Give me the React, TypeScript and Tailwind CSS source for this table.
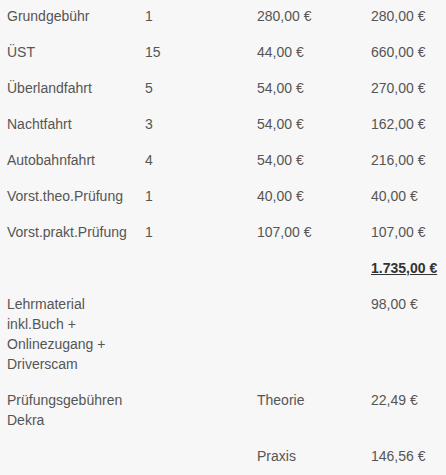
const rows: { name: string[]; qty?: string; unit?: string; total?: string; sum?: boolean }[] = [
  { name: ['Grundgebühr'], qty: '1', unit: '280,00 €', total: '280,00 €' },
  { name: ['ÜST'], qty: '15', unit: '44,00 €', total: '660,00 €' },
  { name: ['Überlandfahrt'], qty: '5', unit: '54,00 €', total: '270,00 €' },
  { name: ['Nachtfahrt'], qty: '3', unit: '54,00 €', total: '162,00 €' },
  { name: ['Autobahnfahrt'], qty: '4', unit: '54,00 €', total: '216,00 €' },
  { name: ['Vorst.theo.Prüfung'], qty: '1', unit: '40,00 €', total: '40,00 €' },
  { name: ['Vorst.prakt.Prüfung'], qty: '1', unit: '107,00 €', total: '107,00 €' },
  { name: [], total: '1.735,00 €', sum: true },
  { name: ['Lehrmaterial', 'inkl.Buch +', 'Onlinezugang +', 'Driverscam'], total: '98,00 €' },
  { name: ['Prüfungsgebühren', 'Dekra'], unit: 'Theorie', total: '22,49 €' },
  { name: [], unit: 'Praxis', total: '146,56 €' },
]

export default function App() {
  return (
    <div
      className="w-[446px] h-[475px] overflow-hidden bg-[#f7f7f7] text-[14px] leading-[20px] text-[#555]"
      style={{ fontFamily: '"Liberation Sans", Arial, sans-serif' }}
    >
      <div className="-mt-[2px]">
        {rows.map((r, i) => (
          <div key={i} className="grid grid-cols-[138px_112px_114px_1fr]">
            <div className="pl-[7px] py-2">
              {r.name.map((l, j) => (
                <div key={j}>{l}</div>
              ))}
              {r.name.length === 0 && <div>&nbsp;</div>}
            </div>
            <div className="pl-[7px] py-2">{r.qty}</div>
            <div className="pl-[7px] py-2">{r.unit}</div>
            <div className="pl-[7px] py-2">
              {r.sum ? <span className="font-bold underline text-[#333]">{r.total}</span> : r.total}
            </div>
          </div>
        ))}
      </div>
    </div>
  )
}
